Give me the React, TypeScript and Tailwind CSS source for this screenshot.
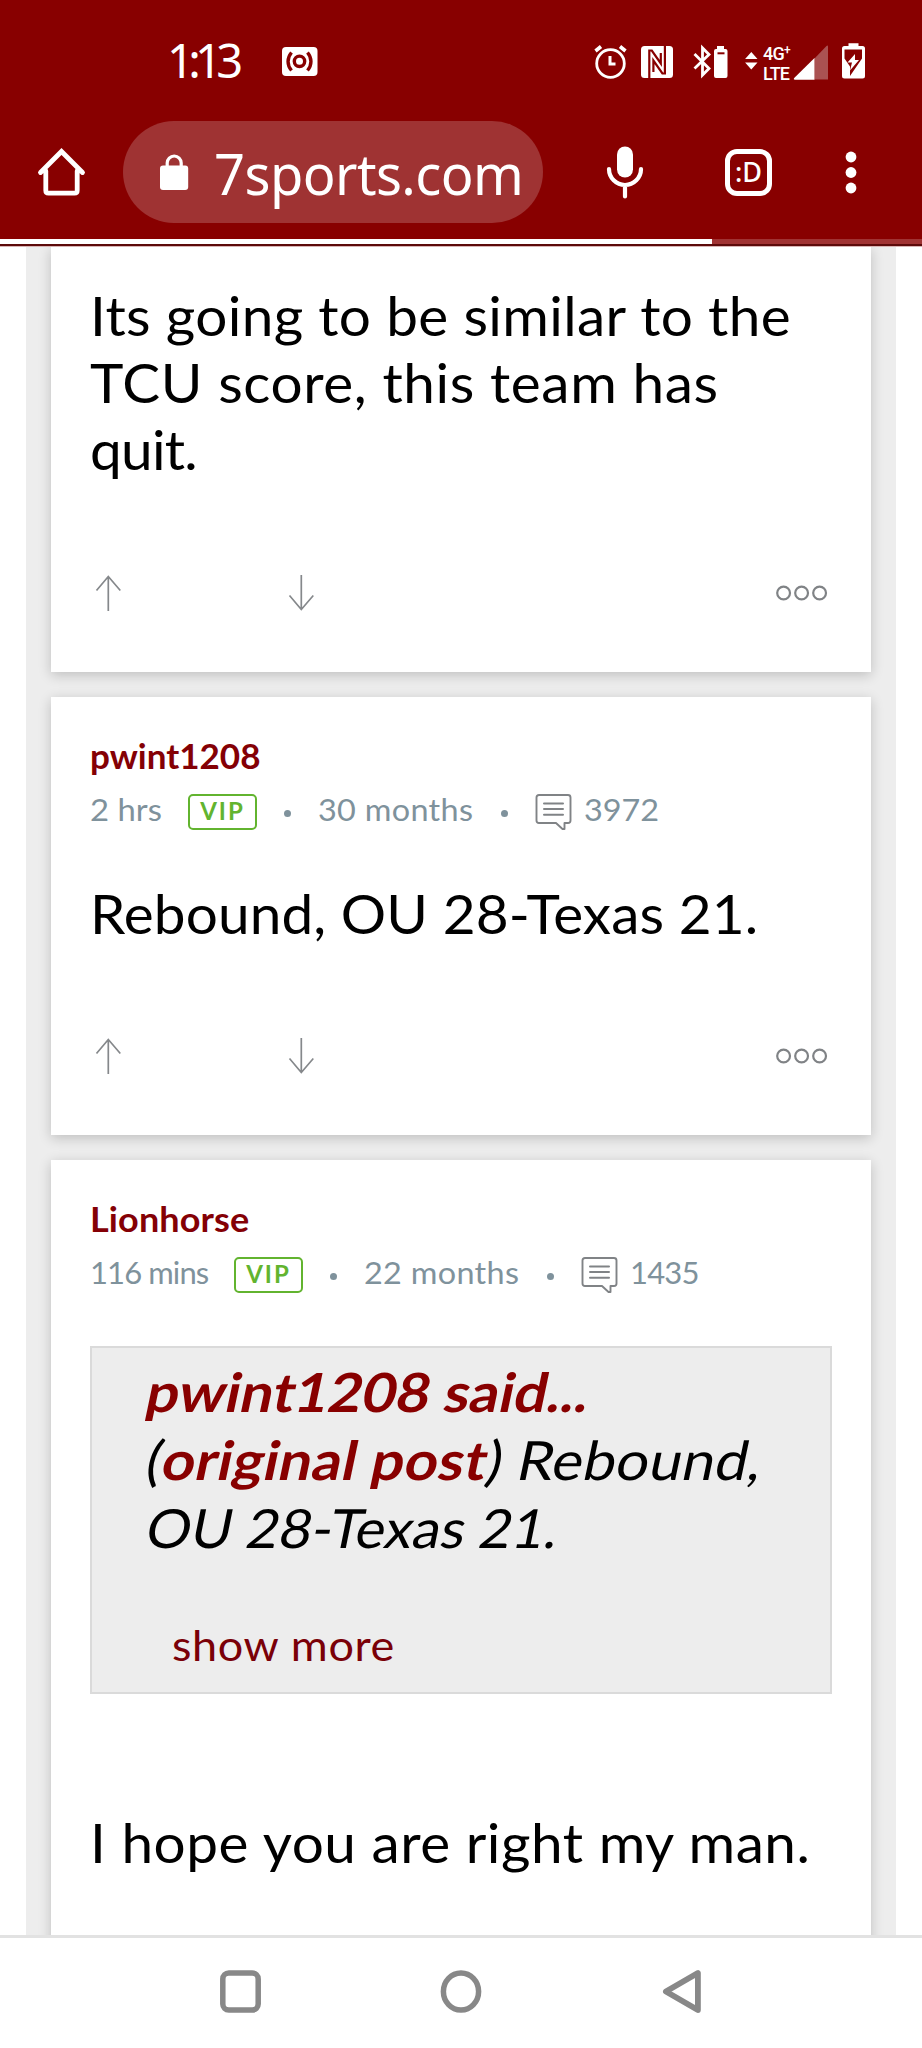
import type { ReactNode } from "react";

function CastIcon() {
  return (
    <svg className="ml-[41px] h-[42px] w-[36px]" viewBox="282 40 36 42">
      <rect x="282" y="47" width="35.5" height="29" rx="4" fill="#fff" />
      <g fill="none" stroke="#880000" strokeWidth="3.4">
        <circle cx="299.5" cy="61.3" r="5.2" />
        <path d="M291.5 52.5c-4.6 5.5-4.6 12.5 0 18M307.5 52.5c4.6 5.5 4.6 12.5 0 18" />
      </g>
    </svg>
  );
}

function AlarmIcon() {
  return (
    <svg className="h-[42px] w-[34px]" viewBox="594 40 34 42">
      <g fill="none" stroke="#fff">
        <circle cx="610.5" cy="63.5" r="13.8" strokeWidth="2.8" />
        <path d="M595.5 51l5.5-4.5M625.5 51l-5.5-4.5" strokeWidth="3.6" />
        <path d="M610 56v8h5.5" strokeWidth="3" />
      </g>
    </svg>
  );
}

function NfcIcon() {
  return (
    <svg className="ml-[13px] h-[42px] w-[32px]" viewBox="641 40 32 42">
      <rect x="641" y="46" width="32" height="32" rx="3.5" fill="#fff" />
      <path
        d="M649.3 78V50.5h2.5L660.8 63.5V53M664.9 46V73.5h-2.5L653.4 60.5V72"
        fill="none"
        stroke="#880000"
        strokeWidth="2.2"
      />
    </svg>
  );
}

function BluetoothIcon() {
  return (
    <svg className="ml-[20px] h-[42px] w-[35px]" viewBox="693 40 35 42">
      <path d="M694.5 54l14.5 14.5-6.5 6.5V48l6.5 6.5-14.5 14" fill="none" stroke="#fff" strokeWidth="2.8" />
      <path d="M717 49v-3h7v3h1.5q2 0 2 2v25q0 2-2 2h-9.5q-2 0-2-2V51q0-2 2-2z" fill="#fff" />
      <path d="M717.5 53.3h7" stroke="#880000" strokeWidth="2" />
    </svg>
  );
}

function DataIcon() {
  return (
    <svg className="ml-[17px] h-[42px] w-[13px]" viewBox="745 40 13 42">
      <path d="M751.3 52l6.2 7h-12.4zM751.3 69.5l6.2-7h-12.4z" fill="#fff" />
    </svg>
  );
}

function SignalIcon() {
  return (
    <svg className="ml-[3px] h-[42px] w-[36px]" viewBox="793 40 36 42">
      <path d="M814.5 58.5l12-12.5q1.5-1 1.5.5v33h-13.5z" fill="#aa5252" />
      <path d="M814.5 58v21.8h-19.5q-2-.3-.8-1.8z" fill="#fff" />
    </svg>
  );
}

function BatteryIcon() {
  return (
    <svg className="ml-[12px] h-[42px] w-[26px]" viewBox="841 40 26 42">
      <path d="M848.5 46v-2.7h10V46h4q2.5 0 2.5 2.5v27.5q0 2.5-2.5 2.5h-18q-2.5 0-2.5-2.5V48.5q0-2.5 2.5-2.5z" fill="#fff" />
      <path d="M844.5 49.5h17.5v9l-12 17.5v-9.5l-5.5-8z" fill="#880000" />
      <path d="M855 54l-7.5 8.5h4.5l-2 8 9-10.5h-4z" fill="#fff" />
    </svg>
  );
}

function HomeIcon() {
  return (
    <svg className="ml-[37px] h-[60px] w-[49px]" viewBox="37 142 49 60">
      <path
        d="M40.5 172.5L61.5 151.5l21 21M45.8 171v19.5q0 2.7 2.7 2.7h26q2.7 0 2.7-2.7V171"
        fill="none"
        stroke="#fff"
        strokeWidth="4.8"
        strokeLinecap="round"
      />
    </svg>
  );
}

function LockIcon() {
  return (
    <svg className="h-[60px] w-[30px]" viewBox="159 142 30 60">
      <rect x="160" y="165.5" width="28.2" height="24.5" rx="3" fill="#fff" />
      <path d="M167.2 168v-5a7 7 0 0 1 14 0v5" fill="none" stroke="#fff" strokeWidth="3.2" />
    </svg>
  );
}

function MicIcon() {
  return (
    <svg className="ml-[63px] h-[60px] w-[38px]" viewBox="606 142 38 60">
      <rect x="617" y="146.5" width="16" height="31" rx="8" fill="#fff" />
      <path d="M609 169a16 16 0 0 0 32 0M625 186v10.5" fill="none" stroke="#fff" strokeWidth="4.2" strokeLinecap="round" />
    </svg>
  );
}

function MenuIcon() {
  return (
    <svg className="ml-[71px] h-[60px] w-[16px]" viewBox="842 142 16 60">
      <g fill="#fff">
        <circle cx="850" cy="157" r="5.4" />
        <circle cx="850" cy="172.5" r="5.4" />
        <circle cx="850" cy="188" r="5.4" />
      </g>
    </svg>
  );
}

function PostsIcon() {
  return (
    <svg className="h-[37px] w-[37px]" viewBox="0 0 37 37" fill="none" stroke="#808386">
      <path d="M4 1h29q2.5 0 2.5 2.5v23q0 2.5-2.5 2.5h-3.5v6h-2l-6.5-6H4q-2.5 0-2.5-2.5v-23Q1.5 1 4 1z" strokeWidth="1.9" strokeLinejoin="round" />
      <path d="M9 9.5h19M9 15h19M9 20.7h19" strokeWidth="2" strokeLinecap="round" />
    </svg>
  );
}

function Actions() {
  return (
    <div className="flex h-[36px] items-center pl-[5px] pr-[4px]">
      <svg className="h-[36px] w-[26px]" viewBox="0 0 26 36" fill="none" stroke="#85888b" strokeWidth="1.7">
        <path d="M13.3 36V1.5M1.5 15.5L13.3 1.5l12 14" />
      </svg>
      <svg className="ml-[167px] h-[36px] w-[26px]" viewBox="0 0 26 36" fill="none" stroke="#85888b" strokeWidth="1.7">
        <path d="M13.3 0v34.5M1.5 20.5l11.8 14 12-14" />
      </svg>
      <svg className="ml-auto h-[16px] w-[52px]" viewBox="0 0 52 16" fill="none" stroke="#808386" strokeWidth="2.2">
        <circle cx="7.6" cy="8" r="6.4" />
        <circle cx="25.6" cy="8" r="6.4" />
        <circle cx="43.6" cy="8" r="6.4" />
      </svg>
    </div>
  );
}

function Dot({ className }: { className: string }) {
  return <span className={`mt-[2px] h-[7px] w-[7px] shrink-0 rounded-full bg-[#7f929c] ${className}`} />;
}

type MetaProps = {
  age: string;
  ageBox: string;
  ageText: string;
  member: string;
  posts: string;
  postsText: string;
};

function Meta({ age, ageBox, ageText, member, posts, postsText }: MetaProps) {
  return (
    <div className="flex h-[36px] items-center whitespace-nowrap text-[31px] leading-[36px] text-[#7f929c]">
      <span className={`shrink-0 pb-[6px] ${ageBox}`}>
        <span className={`inline-block origin-left ${ageText}`}>{age}</span>
      </span>
      <span className="flex h-[36px] w-[69px] shrink-0 justify-center rounded-[5px] border-2 border-[#62b42f] text-[24px] font-bold leading-[29px] tracking-[2px] text-[#62b42f]">
        VIP
      </span>
      <Dot className="ml-[27px]" />
      <span className="ml-[27px] w-[155px] shrink-0 pb-[6px]">
        <span className="inline-block origin-left scale-x-[1.045] tracking-[0.3px]">{member}</span>
      </span>
      <Dot className="ml-[28px]" />
      <span className="ml-[27px]">
        <PostsIcon />
      </span>
      <span className="ml-[12px] pb-[6px]">
        <span className={`inline-block origin-left ${postsText}`}>{posts}</span>
      </span>
    </div>
  );
}

function Card({ className, children }: { className: string; children: ReactNode }) {
  return <article className={`bg-white px-[39px] shadow-[0_3px_12px_rgba(0,0,0,0.2)] ${className}`}>{children}</article>;
}

function StatusBar() {
  return (
    <div className="flex h-[121px] items-start pt-[40px]">
      <span className="ml-[167px] w-[74px] whitespace-nowrap font-['Noto_Sans',sans-serif] text-[47px] leading-[41px] tracking-[-5.7px]">1:13</span>
      <CastIcon />
      <div className="ml-auto mr-[55px] flex">
        <AlarmIcon />
        <NfcIcon />
        <BluetoothIcon />
        <DataIcon />
        <div className="ml-[5px] flex w-[27px] flex-col whitespace-nowrap pt-[4px] font-['Roboto',sans-serif] text-[18px] font-medium leading-[20px] tracking-[-0.7px]">
          <span className="flex">
            4G<span className="text-[12px] leading-[12px]">+</span>
          </span>
          <span className="tracking-[-0.9px]">LTE</span>
        </div>
        <SignalIcon />
        <BatteryIcon />
      </div>
    </div>
  );
}

function Toolbar() {
  return (
    <div className="flex h-[118px] items-start">
      <div className="flex h-[102px] items-center">
        <HomeIcon />
        <div className="ml-[37px] flex h-[102px] w-[420px] items-center rounded-full bg-[#9f3333] pl-[36px]">
          <LockIcon />
          <span className="ml-[25px] mt-[2px] origin-left scale-x-[0.97] whitespace-nowrap font-['Noto_Sans',sans-serif] text-[56px] leading-[60px] tracking-[-0.6px]">
            7sports.com
          </span>
        </div>
        <MicIcon />
        <span className="ml-[81px] flex h-[47px] w-[47px] items-center justify-center rounded-[12px] border-[5px] border-white font-['Noto_Sans',sans-serif] text-[27px] font-medium leading-[36px]">
          :D
        </span>
        <MenuIcon />
      </div>
    </div>
  );
}

export default function App() {
  return (
    <div className="flex h-[2048px] w-[922px] flex-col overflow-hidden bg-white font-['Lato',sans-serif] text-black">
      <header className="shrink-0 bg-[#880000] text-white">
        <StatusBar />
        <Toolbar />
        <div className="h-[5px] bg-[#a03333]">
          <div className="h-full w-[712px] bg-white" />
        </div>
        <div className="h-[2px] bg-[#5c0a0a]" />
        <div className="h-px bg-[#d9b5b5]" />
      </header>

      <main className="mx-[26px] min-h-0 flex-1 overflow-hidden bg-[#ededed] px-[25px]">
        <Card className="h-[425px] pt-[35px]">
          <div className="h-[293px] origin-left scale-x-[1.05] whitespace-nowrap text-[54px] leading-[67px]">
            <div className="tracking-[0.33px]">Its going to be similar to the</div>
            <div className="tracking-[0.57px]">TCU score, this team has</div>
            <div className="tracking-[-0.7px]">quit.</div>
          </div>
          <Actions />
        </Card>

        <Card className="mt-[25px] h-[438px] pt-[38px]">
          <div className="h-[59px] origin-left scale-x-[1.03] text-[34px] font-bold leading-[42px] text-[#840005]">pwint1208</div>
          <Meta age="2 hrs" ageBox="w-[98px]" ageText="scale-x-[1.06]" member="30 months" posts="3972" postsText="scale-x-[1.045]" />
          <div className="mt-[50px] h-[158px] origin-left scale-x-[1.05] whitespace-nowrap text-[54px] leading-[67px] tracking-[0.1px]">
            Rebound, OU 28-Texas 21.
          </div>
          <Actions />
        </Card>

        <Card className="mt-[25px] h-[900px] pt-[38px]">
          <div className="h-[59px] origin-left scale-x-[1.06] text-[34px] font-bold leading-[42px] tracking-[0.1px] text-[#840005]">Lionhorse</div>
          <Meta
            age="116 mins"
            ageBox="w-[144px]"
            ageText="tracking-[-0.9px]"
            member="22 months"
            posts="1435"
            postsText="tracking-[-0.8px]"
          />
          <blockquote className="mt-[53px] h-[348px] border-2 border-[#dadada] bg-[#ededed] pl-[51px] pt-[10px]">
            <div className="whitespace-nowrap text-[54px] leading-[68px]">
              <div className="origin-[0_81%] -skew-x-[11deg] scale-x-[1.08] font-bold text-[#880000]">pwint1208 said...</div>
              <div className="origin-[0_81%] -skew-x-[11deg] scale-x-[1.08] tracking-[0.25px]">
                (<b className="text-[#880000]">original post</b>) Rebound,
              </div>
              <div className="origin-[0_81%] -skew-x-[11deg] scale-x-[1.04]">OU 28-Texas 21.</div>
            </div>
            <div className="ml-[29px] mt-[57px] origin-left scale-x-[1.07] text-[42px] leading-[52px] tracking-[0.6px] text-[#7a0008]">
              show more
            </div>
          </blockquote>
          <div className="mt-[115px] origin-left scale-x-[1.05] whitespace-nowrap text-[54px] leading-[67px] tracking-[0.5px]">
            I hope you are right my man.
          </div>
        </Card>
      </main>

      <nav className="flex h-[113px] shrink-0 items-start border-t-[3px] border-[#e2e2e2] bg-white pt-[30px]">
        <svg className="ml-[219px] h-[46px] w-[43px]" viewBox="0 0 43 46" fill="none" stroke="#888" strokeWidth="5.5">
          <rect x="3.8" y="5" width="35.4" height="37" rx="6" />
        </svg>
        <svg className="ml-[178px] h-[46px] w-[43px]" viewBox="0 0 43 46" fill="none" stroke="#888" strokeWidth="5.5">
          <ellipse cx="21" cy="23.5" rx="17.6" ry="18.5" />
        </svg>
        <svg className="ml-[179px] h-[46px] w-[43px]" viewBox="0 0 43 46" fill="none" stroke="#888" strokeWidth="5.8" strokeLinejoin="round">
          <path d="M3.9 23.5L35.9 5v37z" />
        </svg>
      </nav>
    </div>
  );
}
